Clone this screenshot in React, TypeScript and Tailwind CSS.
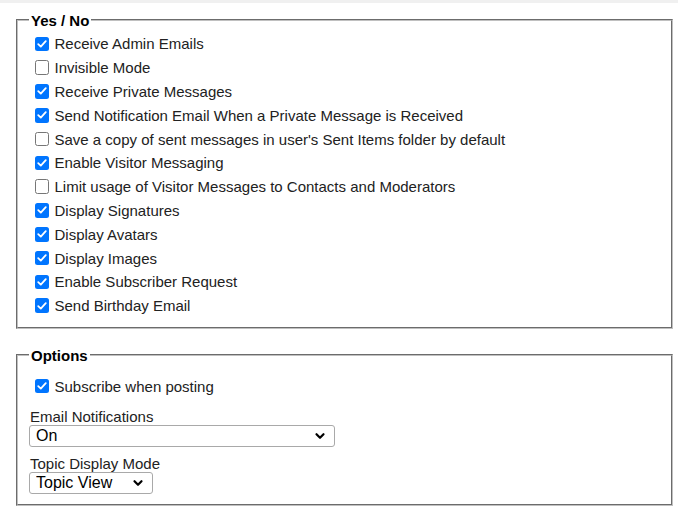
import { ChevronDown } from "lucide-react";

const yesNo = [
  { label: "Receive Admin Emails", checked: true },
  { label: "Invisible Mode", checked: false },
  { label: "Receive Private Messages", checked: true },
  { label: "Send Notification Email When a Private Message is Received", checked: true },
  { label: "Save a copy of sent messages in user's Sent Items folder by default", checked: false },
  { label: "Enable Visitor Messaging", checked: true },
  { label: "Limit usage of Visitor Messages to Contacts and Moderators", checked: false },
  { label: "Display Signatures", checked: true },
  { label: "Display Avatars", checked: true },
  { label: "Display Images", checked: true },
  { label: "Enable Subscriber Request", checked: true },
  { label: "Send Birthday Email", checked: true },
];

function Box({ checked }: { checked: boolean }) {
  if (checked) {
    return (
      <span className="ml-[5.5px] mr-[5.5px] w-[14.5px] h-[14.5px] shrink-0 rounded-[2.5px] bg-[#0075ff] flex items-center justify-center">
        <svg viewBox="0 0 14 14" className="w-[12px] h-[12px]">
          <path
            d="M2.6 7.2 L5.6 10 L11.4 3.6"
            fill="none"
            stroke="white"
            strokeWidth="2.1"
            strokeLinecap="round"
            strokeLinejoin="round"
          />
        </svg>
      </span>
    );
  }
  return (
    <span className="ml-[5.5px] mr-[5.5px] w-[14.5px] h-[14.5px] shrink-0 rounded-[2.5px] bg-white border-[1.3px] border-[#767676]" />
  );
}

function CheckRow({ label, checked }: { label: string; checked: boolean }) {
  return (
    <label className="flex items-center h-[23.8px]">
      <Box checked={checked} />
      <span>{label}</span>
    </label>
  );
}

function Select({ value, width }: { value: string; width: string }) {
  return (
    <div className={`relative ${width}`}>
      <select
        defaultValue={value}
        className="appearance-none w-full h-[22px] pl-[6px] pr-[24px] text-[16px] leading-[20px] text-black bg-white border border-[#a9a9a9] rounded-[3px]"
      >
        <option>{value}</option>
      </select>
      <ChevronDown
        className="absolute right-[8px] top-[4px] w-[14px] h-[14px] text-black pointer-events-none"
        strokeWidth={3.8}
      />
    </div>
  );
}

export default function App() {
  return (
    <div className="min-h-[509px] bg-white text-[#222] text-[15px] leading-[17px] font-['Liberation_Sans',Arial,sans-serif]">
      <div className="h-[3px] bg-[#f0f0f0]" />

      {/* Yes / No */}
      <fieldset className="mt-[8.5px] ml-[16px] w-[657px] border-2 [border-style:groove] border-[#c0c0c0] px-[11px] pt-[3.5px] pb-[9.5px]">
        <legend className="px-[2px] font-bold text-black">Yes / No</legend>
        <div className="flex flex-col">
          {yesNo.map((item) => (
            <CheckRow key={item.label} label={item.label} checked={item.checked} />
          ))}
        </div>
      </fieldset>

      {/* Options */}
      <fieldset className="mt-[17.5px] ml-[16px] w-[657px] border-2 [border-style:groove] border-[#c0c0c0] px-[11px] pt-[10.6px] pb-[9.7px]">
        <legend className="px-[2px] font-bold text-black">Options</legend>
        <CheckRow label="Subscribe when posting" checked={true} />
        <div className="mt-[10.2px] pl-[1px]">Email Notifications</div>
        <Select value="On" width="w-[306px]" />
        <div className="mt-[7.8px] pl-[1px]">Topic Display Mode</div>
        <Select value="Topic View" width="w-[124px]" />
      </fieldset>
    </div>
  );
}
